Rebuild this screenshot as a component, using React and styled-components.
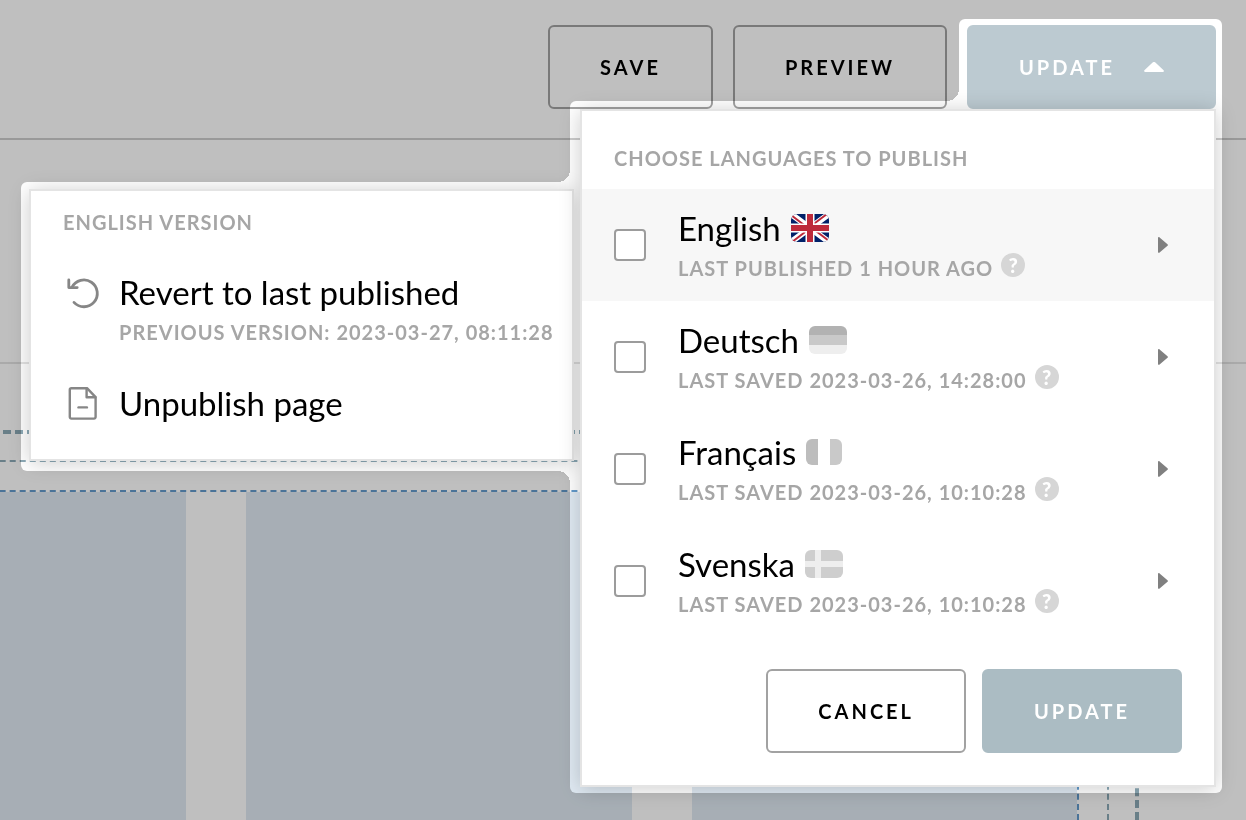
import { useState } from "react";
import styled, { createGlobalStyle } from "styled-components";

const languages = [
    { id: "en", name: "English", status: "Last published 1 hour ago", Flag: FlagEnglish },
    { id: "de", name: "Deutsch", status: "Last saved 2023-03-26, 14:28:00", Flag: FlagGerman },
    { id: "fr", name: "Français", status: "Last saved 2023-03-26, 10:10:28", Flag: FlagFrench },
    { id: "sv", name: "Svenska", status: "Last saved 2023-03-26, 10:10:28", Flag: FlagSwedish },
]

export default function App() {
    const [active, setActive] = useState("en")
    const [checked, setChecked] = useState({})

    const toggle = (id) => {
        setChecked({ ...checked, [id]: !checked[id] })
    }

    return (
        <>
            <GlobalStyle />
            <Page>
                <Header>
                    <Button>Save</Button>
                    <Button>Preview</Button>
                    <UpdateToggle aria-expanded="true">
                        Update
                        <svg width="20" height="10" viewBox="0 0 20 10" aria-hidden="true">
                            <path d="M8.6.6a2 2 0 0 1 2.8 0l8.2 7.7c.7.7.3 1.7-.7 1.7H1.1C.1 10-.3 9 .4 8.3z" fill="#fff" />
                        </svg>
                    </UpdateToggle>
                </Header>
                <PageTitle />
                <Section>
                    <Row>
                        <Columns>
                            <Column />
                            <Column />
                            <Column />
                        </Columns>
                    </Row>
                </Section>

                <Popups>
                    <Menu>
                        <MenuHeading>Choose languages to publish</MenuHeading>
                        {languages.map(({ id, name, status, Flag }) => (
                            <Language key={id} $active={id === active}>
                                <Checkbox
                                    type="checkbox"
                                    id={id}
                                    checked={!!checked[id]}
                                    onChange={() => toggle(id)}
                                />
                                <LanguageTexts>
                                    <Name htmlFor={id}>
                                        {name}
                                        <Flag />
                                    </Name>
                                    <Status>
                                        {status}
                                        <Help aria-label="Help">?</Help>
                                    </Status>
                                </LanguageTexts>
                                <More aria-label={name} onClick={() => setActive(id)}>
                                    <svg width="10" height="16" viewBox="0 0 10 16" aria-hidden="true">
                                        <path d="M0 1.2C0 .2.9-.2 1.6.4l7.9 6.8c.6.5.6 1.1 0 1.6l-7.9 6.8c-.7.6-1.6.2-1.6-.8z" fill="#808080" />
                                    </svg>
                                </More>
                            </Language>
                        ))}
                        <Actions>
                            <Button>Cancel</Button>
                            <PrimaryButton>Update</PrimaryButton>
                        </Actions>
                    </Menu>

                    <Submenu>
                        <SubmenuHeading>English version</SubmenuHeading>
                        <Option>
                            <RevertIcon />
                            <Texts>
                                <Name as="span">Revert to last published</Name>
                                <Status>Previous version: 2023-03-27, 08:11:28</Status>
                            </Texts>
                        </Option>
                        <Option>
                            <UnpublishIcon />
                            <Texts>
                                <Name as="span">Unpublish page</Name>
                            </Texts>
                        </Option>
                    </Submenu>
                </Popups>

                <Dim aria-hidden="true">
                    <ButtonSpot />
                    <MenuSpot />
                    <SubmenuSpot />
                </Dim>
            </Page>
        </>
    )
}

function FlagEnglish() {
    return (
        <FlagSvg width="38" height="28" viewBox="0 0 38 28" aria-hidden="true">
            <path fill="#012169" d="M0 0h38v28H0z" />
            <path stroke="#fff" strokeWidth="6" d="M0 0l38 28M38 0L0 28" />
            <path stroke="#bd2a3b" strokeWidth="2" d="M0 1l17 13M38 27L21 14M36 0L20 12M1 28l17-13" />
            <path stroke="#fff" strokeWidth="9" d="M19 0v28M0 14h38" />
            <path stroke="#bd2a3b" strokeWidth="6" d="M19 0v28M0 14h38" />
        </FlagSvg>
    )
}

function FlagGerman() {
    return (
        <FlagSvg width="38" height="28" viewBox="0 0 38 28" aria-hidden="true">
            <path fill="#b2b2b2" d="M0 0h38v9H0z" />
            <path fill="#c9c9c9" d="M0 9h38v10H0z" />
            <path fill="#eee" d="M0 19h38v9H0z" />
        </FlagSvg>
    )
}

function FlagFrench() {
    return (
        <FlagSvg width="36" height="26" viewBox="0 0 36 26" aria-hidden="true">
            <path fill="#bdbdbd" d="M0 0h12v26H0z" />
            <path fill="#fff" d="M12 0h12v26H12z" />
            <path fill="#c9c9c9" d="M24 0h12v26H24z" />
        </FlagSvg>
    )
}

function FlagSwedish() {
    return (
        <FlagSvg width="38" height="28" viewBox="0 0 38 28" aria-hidden="true">
            <path fill="#cecece" d="M0 0h38v28H0z" />
            <path stroke="#eee" strokeWidth="6" d="M13 0v28M0 14h38" />
        </FlagSvg>
    )
}

function RevertIcon() {
    return (
        <svg width="34" height="34" viewBox="0 0 34 34" fill="none" stroke="#868686" strokeWidth="2.8" strokeLinecap="round" strokeLinejoin="round" aria-hidden="true">
            <path d="M7 26.4A13.4 13.4 0 1 0 5 11.2" />
            <path d="M1.8 4v7.6h8.4" />
        </svg>
    )
}

function UnpublishIcon() {
    return (
        <svg width="34" height="34" viewBox="0 1 34 34" fill="none" stroke="#868686" strokeWidth="2.4" strokeLinecap="round" strokeLinejoin="round" aria-hidden="true">
            <path d="M4.4 2.2h15.6l8.6 9V31a1.6 1.6 0 0 1-1.6 1.6H4.4A1.6 1.6 0 0 1 2.8 31V3.8a1.6 1.6 0 0 1 1.6-1.6z" />
            <path d="M19.6 2.4v8.8h8.8" />
            <path d="M11.5 21.4h8.4" />
        </svg>
    )
}

const GlobalStyle = createGlobalStyle`
    * {
        box-sizing: border-box;
    }

    body {
        margin: 0;
        font-family: Lato, 'Liberation Sans', sans-serif;
        color: #000000;
    }

    button {
        font-family: inherit;
        cursor: pointer;
    }
`

const Page = styled.div`
    position: relative;
    display: flex;
    flex-direction: column;
    height: 100vh;
    overflow: hidden;
    background-color: #FFFFFF;
`

const Header = styled.header`
    display: flex;
    justify-content: flex-end;
    gap: 20px;
    padding: 25px 30px 29px;
    border-bottom: 2px solid #CCCCCC;
`

const Button = styled.button`
    height: 84px;
    padding: 0 50px;
    border: 2px solid #A2A2A2;
    border-radius: 6px;
    background: none;
    color: #000000;
    font-size: 20px;
    font-weight: bold;
    letter-spacing: 3px;
    text-transform: uppercase;
`

const PrimaryButton = styled(Button)`
    border-color: #ABBCC3;
    background-color: #ABBCC3;
    color: #FFFFFF;
`

const UpdateToggle = styled(Button)`
    display: flex;
    align-items: center;
    gap: 29px;
    border-color: #BCCAD1;
    background-color: #BCCAD1;
    color: #FFFFFF;
`

const PageTitle = styled.div`
    flex: 0 0 224px;
    border-bottom: 2px solid #E3E3E3;
`

// the canvas continues past the left edge of the window
const Section = styled.main`
    flex: 1;
    display: flex;
    margin: 66px 107px 0 -261px;
    padding: 26px 26px 0;
    border: 4px dashed #8CA9B6;
    border-bottom: none;
`

const Row = styled.div`
    flex: 1;
    display: flex;
    padding: 28px 28px 0;
    border: 2px dashed #8CA9B6;
    border-bottom: none;
`

const Columns = styled.div`
    flex: 1;
    display: grid;
    grid-template-columns: repeat(3, 1fr);
    gap: 60px;
    border: 2px dashed #629ACB;
    border-bottom: none;
`

const Column = styled.div`
    background-color: #DFE9F2;
`

const Popups = styled.div`
    position: absolute;
    top: 109px;
    right: 30px;
    display: flex;
    flex-direction: row-reverse;
    align-items: flex-start;
    gap: 6px;
`

const Panel = styled.div`
    border: 2px solid #E4E4E4;
    background-color: #FFFFFF;
    box-shadow: 0 2px 20px rgba(0, 0, 0, 0.2);
`

const Menu = styled(Panel)`
    position: relative;
    z-index: 1;
    width: 636px;
`

const Submenu = styled(Panel)`
    width: 545px;
    margin-top: 80px;
    padding-bottom: 21px;
`

const Heading = styled.h2`
    margin: 0;
    padding: 0 32px;
    color: #A6A6A6;
    font-size: 20px;
    font-weight: bold;
    line-height: 24px;
    letter-spacing: 1px;
    text-transform: uppercase;
`

const MenuHeading = styled(Heading)`
    padding-top: 35px;
    padding-bottom: 19px;
`

const SubmenuHeading = styled(Heading)`
    padding-top: 19px;
    padding-bottom: 22px;
`

const Language = styled.div`
    display: flex;
    align-items: center;
    gap: 32px;
    height: 112px;
    padding: 0 32px;
    background-color: ${({ $active }) => $active ? "#F7F7F7" : "transparent"};
`

const Actions = styled.div`
    display: flex;
    justify-content: flex-end;
    gap: 16px;
    padding: 32px;
`

const Checkbox = styled.input`
    appearance: none;
    width: 32px;
    height: 32px;
    margin: 0;
    border: 2px solid #9C9C9C;
    border-radius: 4px;
    background-color: #FFFFFF;
    cursor: pointer;

    &:checked {
        background-color: #ABBCC3;
    }
`

const Texts = styled.span`
    flex: 1;
    display: flex;
    flex-direction: column;
    align-items: flex-start;
`

const LanguageTexts = styled(Texts)`
    padding-top: 6px;
`

const Name = styled.label`
    display: flex;
    align-items: center;
    gap: 10px;
    font-size: 33px;
    line-height: 40px;
`

const Status = styled.span`
    display: flex;
    align-items: center;
    gap: 8px;
    color: #A6A6A6;
    font-size: 20px;
    font-weight: bold;
    line-height: 40px;
    letter-spacing: 1px;
    text-transform: uppercase;
    white-space: nowrap;
`

const FlagSvg = styled.svg`
    border-radius: 6px;
`

const Help = styled.button`
    width: 24px;
    height: 24px;
    margin-bottom: 6px;
    padding: 0;
    border: none;
    border-radius: 50%;
    background-color: #D6D6D6;
    color: #FFFFFF;
    font-size: 20px;
    font-weight: 900;
    line-height: 24px;
`

const More = styled.button`
    display: flex;
    padding: 14px;
    border: none;
    background: none;
`

const Option = styled.button`
    display: flex;
    align-items: flex-start;
    gap: 18px;
    width: 100%;
    padding: 16px 32px 15px;
    border: none;
    background: none;
    color: inherit;
    text-align: left;

    svg {
        flex: none;
        margin: 4px 0 0 4px;
    }
`

// white parts of the layer leave what is below them as it is
const Dim = styled.div`
    position: absolute;
    inset: 0;
    z-index: 2;
    background-color: #BFBFBF;
    mix-blend-mode: multiply;
    pointer-events: none;
`

const Spot = styled.div`
    position: absolute;
    border-radius: 6px;
    background-color: #FFFFFF;
`

const ButtonSpot = styled(Spot)`
    top: 19px;
    right: 24px;
    width: 263px;
    height: 100px;

    &::before {
        content: "";
        position: absolute;
        top: 70px;
        right: 100%;
        width: 12px;
        height: 12px;
        background: radial-gradient(circle at 0 0, transparent 12px, #FFFFFF 12px);
    }
`

const MenuSpot = styled(Spot)`
    top: 101px;
    right: 24px;
    width: 652px;
    height: 692px;
`

const SubmenuSpot = styled(Spot)`
    top: 182px;
    right: 660px;
    width: 565px;
    height: 289px;

    &::before,
    &::after {
        content: "";
        position: absolute;
        right: 16px;
        width: 12px;
        height: 12px;
    }

    &::before {
        bottom: 100%;
        background: radial-gradient(circle at 0 0, transparent 12px, #FFFFFF 12px);
    }

    &::after {
        top: 100%;
        background: radial-gradient(circle at 0 100%, transparent 12px, #FFFFFF 12px);
    }
`
